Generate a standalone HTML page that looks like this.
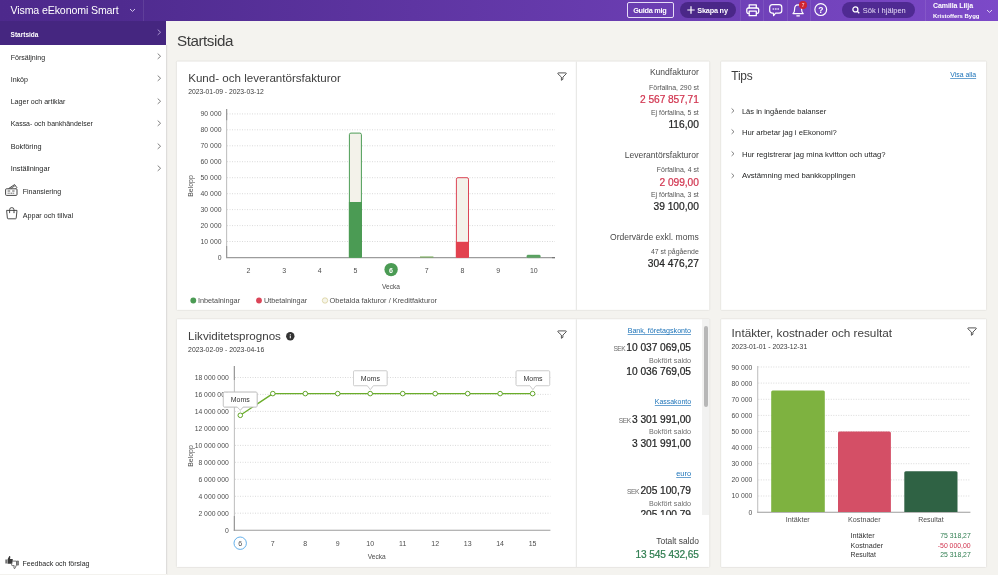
<!DOCTYPE html>
<html lang="sv">
<head>
<meta charset="utf-8">
<title>Startsida</title>
<style>
*{box-sizing:border-box;margin:0;padding:0}
html,body{width:998px;height:575px;overflow:hidden}
body{font-family:"Liberation Sans",sans-serif;background:#f4f3ef;color:#252626;position:relative}
#w{position:absolute;left:0;top:0;width:998px;height:575px;will-change:transform}
.abs{position:absolute}
.t{position:absolute;white-space:nowrap;line-height:20px;height:20px}
svg{position:absolute;overflow:visible}
#top{position:absolute;left:0;top:0;width:998px;height:20.8px;background:linear-gradient(90deg,#4d298c 0%,#4f2b8f 12%,#7c49c8 100%)}
.sep{position:absolute;top:0;width:1px;height:20.8px;background:rgba(255,255,255,.09)}
#side{position:absolute;left:0;top:20.8px;width:166px;height:554.2px;background:#fff}
.panel{position:absolute;background:#fff;border:1px solid #e3e2de}
</style>
</head>
<body>
<div id="w">
<!-- TOPBAR -->
<div id="top"></div>
<div class="t" style="left:10.5px;top:0.25px;font-size:10.6px;color:#fff;letter-spacing:-.12px">Visma eEkonomi Smart</div>
<svg style="left:129px;top:8.2px" width="7" height="5" viewBox="0 0 7 5"><path d="M1 1L3.5 3.4L6 1" fill="none" stroke="#d9cdee" stroke-width="0.95"/></svg>
<div class="sep" style="left:143px"></div>
<div class="sep" style="left:740px"></div>
<div class="sep" style="left:763px"></div>
<div class="sep" style="left:786.5px"></div>
<div class="sep" style="left:809.5px"></div>
<div class="sep" style="left:925px"></div>
<div class="abs" style="left:626.5px;top:2.4px;width:47.5px;height:15.2px;border:1px solid #e6dcf6;border-radius:2px"></div>
<div class="t" style="left:633.2px;top:0.75px;font-size:7.3px;color:#fff;font-weight:700;letter-spacing:-.28px">Guida mig</div>
<div class="abs" style="left:680px;top:2.2px;width:56.4px;height:15.6px;border-radius:8px;background:#4a2788"></div>
<svg style="left:686.5px;top:6.2px" width="8" height="8" viewBox="0 0 8 8"><path d="M4 0.3V7.7M0.3 4H7.7" stroke="#fff" stroke-width="1.2" fill="none"/></svg>
<div class="t" style="left:697.3px;top:0.75px;font-size:7.3px;color:#fff;font-weight:700;letter-spacing:-.2px">Skapa ny</div>
<svg style="left:745.5px;top:3.5px" width="13.5" height="12.5" viewBox="0 0 13.5 12.5" fill="none" stroke="#fff" stroke-width="1.3" stroke-linejoin="round"><path d="M3.2 4.2V0.8H10.3V4.2"/><rect x="0.8" y="4" width="11.9" height="5.4" rx="1.6"/><path d="M3.2 7.2H10.3V11.7H3.2Z" fill="#6f40ba"/></svg>
<svg style="left:769px;top:3.6px" width="13.5" height="12.5" viewBox="0 0 13.5 12.5" fill="none" stroke="#fff" stroke-width="1.2" stroke-linejoin="round"><path d="M3.4 0.7H10.1Q12.8 0.7 12.8 3.4V6.4Q12.8 9.1 10.1 9.1H6.6L4.6 11.6L4.3 9.1H3.4Q0.7 9.1 0.7 6.4V3.4Q0.7 0.7 3.4 0.7Z"/><path d="M3.6 4.9H5.2M6 4.9H7.6M8.4 4.9H10" stroke="#e0d2f5" stroke-width="1.5"/></svg>
<svg style="left:792px;top:3.8px" width="12.5" height="13" viewBox="0 0 12.5 13" fill="none" stroke="#fff" stroke-width="1.2" stroke-linejoin="round" stroke-linecap="round"><path d="M1 9.6Q2.6 8.4 2.6 5.2Q2.6 0.9 6.1 0.9Q9.6 0.9 9.6 5.2Q9.6 8.4 11.2 9.6Z"/><path d="M4.8 11.8H7.4"/></svg>
<div class="abs" style="left:798.8px;top:0.6px;width:8.2px;height:8.2px;border-radius:50%;background:#cf2431"></div>
<div class="t" style="left:703.0px;width:200px;text-align:center;top:-4.25px;font-size:4.8px;color:#f4b4b4;font-weight:700">7</div>
<svg style="left:814px;top:3px" width="13.5" height="13.5" viewBox="0 0 13.5 13.5" fill="none" stroke="#fff" stroke-width="1.2"><circle cx="6.75" cy="6.6" r="5.9"/></svg>
<div class="t" style="left:720.8px;width:200px;text-align:center;top:0.25px;font-size:8.5px;color:#fff;font-weight:700">?</div>
<div class="abs" style="left:842px;top:2.2px;width:73.4px;height:15.6px;border-radius:8px;background:#4f2a92"></div>
<svg style="left:851.5px;top:6px" width="8" height="8" viewBox="0 0 8 8" fill="none" stroke="#fff" stroke-width="1.3"><circle cx="3.4" cy="3.4" r="2.5"/><path d="M5.2 5.2L7.3 7.3"/></svg>
<div class="t" style="left:862.8px;top:0.75px;font-size:7.5px;color:#e6dcf6">Sök i hjälpen</div>
<div class="t" style="left:932.9px;top:-4.25px;font-size:7.0px;color:#fff;font-weight:700;letter-spacing:-.06px">Camilla Lilja</div>
<div class="t" style="left:932.9px;top:6.25px;font-size:5.95px;color:#fff;font-weight:700">Kristoffers Bygg</div>
<svg style="left:986.3px;top:8.9px" width="7" height="5" viewBox="0 0 7 5"><path d="M1 1L3.5 3.4L6 1" fill="none" stroke="#e6dcf6" stroke-width="0.95"/></svg>
<!-- SIDEBAR -->
<div id="side"></div>
<svg style="left:0;top:0" width="998" height="575" viewBox="0 0 998 575"><path d="M166.6 45V575" stroke="#dedddb" stroke-width="1.2" fill="none"/></svg>
<div class="abs" style="left:0;top:20.8px;width:166.3px;height:24px;background:#452680"></div>
<div class="t" style="left:10.6px;top:24.75px;font-size:6.5px;color:#fff;font-weight:700">Startsida</div>
<svg style="left:156.5px;top:29.2px" width="4.5" height="6.5" viewBox="0 0 4.5 6.5"><path d="M0.7 0.6L3.6 3.25L0.7 5.9" fill="none" stroke="#b9a6dc" stroke-width="0.85"/></svg>
<div class="t" style="left:10.7px;top:47.75px;font-size:7.05px;color:#252626">Försäljning</div>
<svg style="left:156.5px;top:53.1px" width="4.5" height="6.5" viewBox="0 0 4.5 6.5"><path d="M0.7 0.6L3.6 3.25L0.7 5.9" fill="none" stroke="#6b6b6b" stroke-width="0.85"/></svg>
<div class="t" style="left:10.7px;top:69.75px;font-size:7.05px;color:#252626">Inköp</div>
<svg style="left:156.5px;top:75.4px" width="4.5" height="6.5" viewBox="0 0 4.5 6.5"><path d="M0.7 0.6L3.6 3.25L0.7 5.9" fill="none" stroke="#6b6b6b" stroke-width="0.85"/></svg>
<div class="t" style="left:10.7px;top:92.25px;font-size:7.08px;color:#252626">Lager och artiklar</div>
<svg style="left:156.5px;top:97.6px" width="4.5" height="6.5" viewBox="0 0 4.5 6.5"><path d="M0.7 0.6L3.6 3.25L0.7 5.9" fill="none" stroke="#6b6b6b" stroke-width="0.85"/></svg>
<div class="t" style="left:10.7px;top:113.75px;font-size:6.95px;color:#252626">Kassa- och bankhändelser</div>
<svg style="left:156.5px;top:120.0px" width="4.5" height="6.5" viewBox="0 0 4.5 6.5"><path d="M0.7 0.6L3.6 3.25L0.7 5.9" fill="none" stroke="#6b6b6b" stroke-width="0.85"/></svg>
<div class="t" style="left:10.7px;top:136.75px;font-size:7.3px;color:#252626">Bokföring</div>
<svg style="left:156.5px;top:142.6px" width="4.5" height="6.5" viewBox="0 0 4.5 6.5"><path d="M0.7 0.6L3.6 3.25L0.7 5.9" fill="none" stroke="#6b6b6b" stroke-width="0.85"/></svg>
<div class="t" style="left:10.7px;top:158.75px;font-size:7.27px;color:#252626">Inställningar</div>
<svg style="left:156.5px;top:165.0px" width="4.5" height="6.5" viewBox="0 0 4.5 6.5"><path d="M0.7 0.6L3.6 3.25L0.7 5.9" fill="none" stroke="#6b6b6b" stroke-width="0.85"/></svg>
<svg style="left:5.3px;top:184px" width="13" height="12" viewBox="0 0 13 12" fill="none" stroke="#3a3a3a" stroke-width="0.95" stroke-linejoin="round"><rect x="0.6" y="4.8" width="11.4" height="6.6" rx="0.9"/><path d="M3.6 4.6L9.6 0.6L11.8 3.6L10.9 4.6"/><path d="M5.8 4.4L9.9 1.8" stroke-width="0.8"/><path d="M2.6 7H5.2M7.2 7H9.6" stroke-width="0.9" stroke="#444"/><path d="M2.6 9.2H9.6" stroke-width="0.9" stroke="#555" stroke-dasharray="1.2 0.5"/></svg>
<div class="t" style="left:22.7px;top:181.75px;font-size:7.05px;color:#252626">Finansiering</div>
<svg style="left:6px;top:206.8px" width="12" height="12.5" viewBox="0 0 12 12.5" fill="none" stroke="#3a3a3a" stroke-width="0.9" stroke-linejoin="round"><path d="M0.6 3.4H11L10.2 11.2Q10.1 11.8 9.5 11.8H2.1Q1.5 11.8 1.4 11.2Z"/><path d="M3.6 5.4V2.8Q3.6 0.6 5.8 0.6Q8 0.6 8 2.8V5.4"/><circle cx="3.6" cy="5.6" r="0.55" fill="#3a3a3a" stroke="none"/><circle cx="8" cy="5.6" r="0.55" fill="#3a3a3a" stroke="none"/></svg>
<div class="t" style="left:22.7px;top:206.25px;font-size:7.15px;color:#252626">Appar och tillval</div>
<svg style="left:5.2px;top:555.0px" width="14" height="14" viewBox="0 0 14 14"><path d="M0.5 4.4H1.7V8.6H0.5ZM2.5 4.6L4.3 1Q5.5 0.8 5.3 2.4L5 4H7.3Q8 4.2 7.8 5L7.2 8.2Q7 8.8 6.3 8.8H2.5Z" fill="#3a3a3a"/><path d="M12.3 6H13.4V10.1H12.3ZM11.5 10L9.8 13.5Q8.7 13.7 8.9 12.3L9.2 10.6H7.1Q6.4 10.4 6.6 9.6L7.2 6.7Q7.4 6.1 8.1 6.1H11.5Z" fill="#fff" stroke="#444" stroke-width="0.75" stroke-linejoin="round"/></svg>
<div class="t" style="left:22.5px;top:553.75px;font-size:7.0px;color:#252626">Feedback och förslag</div>
<!-- MAIN -->
<div class="t" style="left:177.0px;top:30.75px;font-size:15.2px;color:#3d3d3d;letter-spacing:-.45px">Startsida</div>
<svg style="left:0;top:0" width="998" height="575" viewBox="0 0 998 575">
<rect x="176.35" y="61.1" width="533.40" height="249.30" rx="1" fill="#fff" stroke="#e5e4e0" stroke-width="0.9"/>
<rect x="720.65" y="61.1" width="265.95" height="249.30" rx="1" fill="#fff" stroke="#e5e4e0" stroke-width="0.9"/>
<rect x="176.35" y="318.75" width="533.40" height="248.70" rx="1" fill="#fff" stroke="#e5e4e0" stroke-width="0.9"/>
<rect x="720.65" y="318.75" width="265.95" height="248.70" rx="1" fill="#fff" stroke="#e5e4e0" stroke-width="0.9"/>
</svg>
<svg style="left:0;top:0" width="998" height="575" viewBox="0 0 998 575"><path d="M576.35 61.6V310M576.35 319.2V567" stroke="#e7e7e5" stroke-width="1.1" fill="none"/></svg>
<div class="t" style="left:188.2px;top:68.25px;font-size:11.6px;color:#3d3d3d">Kund- och leverantörsfakturor</div>
<div class="t" style="left:188.2px;top:81.75px;font-size:6.8px;color:#3a3a3a">2023-01-09 - 2023-03-12</div>
<svg style="left:556.5px;top:72px" width="10" height="9" viewBox="0 0 10 9"><path d="M1.3 0.9H8.7Q9.6 0.9 9.2 1.8L5.9 5.1V7.3L4.4 8.3V5.1L0.9 1.8Q0.5 0.9 1.3 0.9Z" fill="none" stroke="#3a3a3a" stroke-width="0.85" stroke-linejoin="round"/></svg>
<svg style="left:0;top:0" width="998" height="575" viewBox="0 0 998 575">
<line x1="227.0" y1="241.5" x2="555.0" y2="241.5" stroke="#d3d3d3" stroke-width="0.85" stroke-dasharray="1 1.5"/>
<line x1="227.0" y1="225.6" x2="555.0" y2="225.6" stroke="#d3d3d3" stroke-width="0.85" stroke-dasharray="1 1.5"/>
<line x1="227.0" y1="209.6" x2="555.0" y2="209.6" stroke="#d3d3d3" stroke-width="0.85" stroke-dasharray="1 1.5"/>
<line x1="227.0" y1="193.7" x2="555.0" y2="193.7" stroke="#d3d3d3" stroke-width="0.85" stroke-dasharray="1 1.5"/>
<line x1="227.0" y1="177.7" x2="555.0" y2="177.7" stroke="#d3d3d3" stroke-width="0.85" stroke-dasharray="1 1.5"/>
<line x1="227.0" y1="161.7" x2="555.0" y2="161.7" stroke="#d3d3d3" stroke-width="0.85" stroke-dasharray="1 1.5"/>
<line x1="227.0" y1="145.8" x2="555.0" y2="145.8" stroke="#d3d3d3" stroke-width="0.85" stroke-dasharray="1 1.5"/>
<line x1="227.0" y1="129.8" x2="555.0" y2="129.8" stroke="#d3d3d3" stroke-width="0.85" stroke-dasharray="1 1.5"/>
<line x1="227.0" y1="113.9" x2="555.0" y2="113.9" stroke="#d3d3d3" stroke-width="0.85" stroke-dasharray="1 1.5"/>
<line x1="226.6" y1="109" x2="226.6" y2="258" stroke="#c2c2c2" stroke-width="1.1"/>
<line x1="226.6" y1="109" x2="226.6" y2="120.3" stroke="#9a9a9a" stroke-width="1.2"/>
<line x1="226.6" y1="246" x2="226.6" y2="258" stroke="#9a9a9a" stroke-width="1.2"/>
<line x1="226" y1="257.6" x2="555" y2="257.6" stroke="#9c9c9c" stroke-width="1.1"/>
<line x1="552" y1="257.6" x2="555" y2="257.6" stroke="#777" stroke-width="1.2"/>
<path d="M349.4 257.4V134.6Q349.4 133.1 350.9 133.1H359.9Q361.4 133.1 361.4 134.6V257.4Z" fill="#f3f2ea" stroke="#4d9c56" stroke-width="1"/>
<rect x="348.9" y="202" width="13" height="55.4" fill="#4b9b54"/>
<path d="M456.4 257.4V179.2Q456.4 177.7 457.9 177.7H467Q468.5 177.7 468.5 179.2V257.4Z" fill="#f3f2ea" stroke="#dc4556" stroke-width="1"/>
<rect x="455.9" y="241.5" width="13.1" height="15.9" fill="#e2424f"/>
<rect x="456.9" y="240.7" width="11.1" height="0.8" fill="#fff"/>
<rect x="420" y="256.5" width="13.4" height="1" fill="#6fa84f"/>
<rect x="526.8" y="255" width="13.6" height="2.6" rx="1.2" fill="#5ba363" stroke="#4b9b54" stroke-width="0.4"/>
<circle cx="391.1" cy="269.6" r="6.7" fill="#4b9b54"/>
<circle cx="193.3" cy="300.5" r="2.9" fill="#4b9b54"/>
<circle cx="259" cy="300.5" r="2.9" fill="#db4558"/>
<circle cx="325" cy="300.5" r="2.7" fill="#f6f5ea" stroke="#d9d09c" stroke-width="0.8"/>
</svg>
<div class="t" style="right:776.5px;top:247.75px;font-size:6.85px;color:#4d4d4d">0</div>
<div class="t" style="right:776.5px;top:231.75px;font-size:6.85px;color:#4d4d4d">10 000</div>
<div class="t" style="right:776.5px;top:215.75px;font-size:6.85px;color:#4d4d4d">20 000</div>
<div class="t" style="right:776.5px;top:199.75px;font-size:6.85px;color:#4d4d4d">30 000</div>
<div class="t" style="right:776.5px;top:183.75px;font-size:6.85px;color:#4d4d4d">40 000</div>
<div class="t" style="right:776.5px;top:167.75px;font-size:6.85px;color:#4d4d4d">50 000</div>
<div class="t" style="right:776.5px;top:151.75px;font-size:6.85px;color:#4d4d4d">60 000</div>
<div class="t" style="right:776.5px;top:135.75px;font-size:6.85px;color:#4d4d4d">70 000</div>
<div class="t" style="right:776.5px;top:119.75px;font-size:6.85px;color:#4d4d4d">80 000</div>
<div class="t" style="right:776.5px;top:103.75px;font-size:6.85px;color:#4d4d4d">90 000</div>
<div class="t" style="left:148.4px;width:200px;text-align:center;top:260.75px;font-size:7.0px;color:#4d4d4d">2</div>
<div class="t" style="left:184.1px;width:200px;text-align:center;top:260.75px;font-size:7.0px;color:#4d4d4d">3</div>
<div class="t" style="left:219.8px;width:200px;text-align:center;top:260.75px;font-size:7.0px;color:#4d4d4d">4</div>
<div class="t" style="left:255.4px;width:200px;text-align:center;top:260.75px;font-size:7.0px;color:#4d4d4d">5</div>
<div class="t" style="left:291.1px;width:200px;text-align:center;top:261.25px;font-size:7.1px;color:#fff;font-weight:700">6</div>
<div class="t" style="left:326.8px;width:200px;text-align:center;top:260.75px;font-size:7.0px;color:#4d4d4d">7</div>
<div class="t" style="left:362.5px;width:200px;text-align:center;top:260.75px;font-size:7.0px;color:#4d4d4d">8</div>
<div class="t" style="left:398.2px;width:200px;text-align:center;top:260.75px;font-size:7.0px;color:#4d4d4d">9</div>
<div class="t" style="left:433.8px;width:200px;text-align:center;top:260.75px;font-size:7.0px;color:#4d4d4d">10</div>
<div class="t" style="left:291.0px;width:200px;text-align:center;top:276.75px;font-size:6.6px;color:#4d4d4d">Vecka</div>
<div class="abs" style="left:190.6px;top:185.6px;width:0;height:0"><div style="position:absolute;left:0;top:0;transform:translate(-50%,-50%) rotate(-90deg);white-space:nowrap;font-size:6.9px;line-height:8px;color:#4d4d4d">Belopp</div></div>
<div class="t" style="left:197.9px;top:290.75px;font-size:7.3px;color:#4d4d4d">Inbetalningar</div>
<div class="t" style="left:263.9px;top:290.75px;font-size:7.27px;color:#4d4d4d">Utbetalningar</div>
<div class="t" style="left:329.6px;top:290.75px;font-size:7.38px;color:#4d4d4d">Obetalda fakturor / Kreditfakturor</div>
<div class="t" style="right:299.2px;top:62.25px;font-size:8.55px;color:#4a4a4a">Kundfakturor</div>
<div class="t" style="right:299.2px;top:77.75px;font-size:6.95px;color:#555">Förfallna, 290 st</div>
<div class="t" style="right:299.2px;top:89.75px;font-size:10.2px;color:#d1344f;-webkit-text-stroke:0.22px;letter-spacing:-.06px">2 567 857,71</div>
<div class="t" style="right:299.2px;top:102.75px;font-size:6.95px;color:#555">Ej förfallna, 5 st</div>
<div class="t" style="right:299.2px;top:114.75px;font-size:10.2px;color:#252626;-webkit-text-stroke:0.22px;letter-spacing:0px">116,00</div>
<div class="t" style="right:299.2px;top:145.25px;font-size:8.55px;color:#4a4a4a">Leverantörsfakturor</div>
<div class="t" style="right:299.2px;top:159.75px;font-size:6.95px;color:#555">Förfallna, 4 st</div>
<div class="t" style="right:299.2px;top:172.75px;font-size:10.2px;color:#d1344f;-webkit-text-stroke:0.22px;letter-spacing:-.04px">2 099,00</div>
<div class="t" style="right:299.2px;top:184.75px;font-size:6.95px;color:#555">Ej förfallna, 3 st</div>
<div class="t" style="right:299.2px;top:196.75px;font-size:10.2px;color:#252626;-webkit-text-stroke:0.22px;letter-spacing:0px">39 100,00</div>
<div class="t" style="right:299.2px;top:227.25px;font-size:8.55px;color:#4a4a4a">Ordervärde exkl. moms</div>
<div class="t" style="right:299.2px;top:241.75px;font-size:6.95px;color:#555">47 st pågående</div>
<div class="t" style="right:299.2px;top:253.75px;font-size:10.2px;color:#252626;-webkit-text-stroke:0.22px;letter-spacing:0px">304 476,27</div>
<!-- TIPS -->
<div class="t" style="left:731.3px;top:66.25px;font-size:11.9px;color:#3d3d3d;letter-spacing:-.2px">Tips</div>
<div class="t" style="left:950.2px;top:64.75px;font-size:6.9px;color:#1b72b8;text-decoration:underline;text-underline-offset:0.6px;text-decoration-thickness:0.7px;text-decoration-color:rgba(27,114,184,.65)">Visa alla</div>
<div class="t" style="left:741.9px;top:101.75px;font-size:7.55px;color:#252626">Läs in ingående balanser</div>
<svg style="left:731px;top:107.6px" width="4" height="5.4" viewBox="0 0 4 5.4"><path d="M0.6 0.5L3 2.7L0.6 4.9" fill="none" stroke="#555" stroke-width="0.75"/></svg>
<div class="t" style="left:741.9px;top:122.75px;font-size:7.63px;color:#252626">Hur arbetar jag i eEkonomi?</div>
<svg style="left:731px;top:129.3px" width="4" height="5.4" viewBox="0 0 4 5.4"><path d="M0.6 0.5L3 2.7L0.6 4.9" fill="none" stroke="#555" stroke-width="0.75"/></svg>
<div class="t" style="left:741.9px;top:144.75px;font-size:7.73px;color:#252626">Hur registrerar jag mina kvitton och uttag?</div>
<svg style="left:731px;top:150.7px" width="4" height="5.4" viewBox="0 0 4 5.4"><path d="M0.6 0.5L3 2.7L0.6 4.9" fill="none" stroke="#555" stroke-width="0.75"/></svg>
<div class="t" style="left:741.9px;top:165.75px;font-size:7.73px;color:#252626">Avstämning med bankkopplingen</div>
<svg style="left:731px;top:172.8px" width="4" height="5.4" viewBox="0 0 4 5.4"><path d="M0.6 0.5L3 2.7L0.6 4.9" fill="none" stroke="#555" stroke-width="0.75"/></svg>
<!-- LIKVIDITET -->
<div class="t" style="left:188.1px;top:326.25px;font-size:11.6px;color:#3d3d3d">Likviditetsprognos</div>
<svg style="left:286.2px;top:331.9px" width="8.6" height="8.6" viewBox="0 0 8.6 8.6"><circle cx="4.3" cy="4.3" r="4.2" fill="#333"/><rect x="3.8" y="3.7" width="1" height="2.6" fill="#fff"/><rect x="3.8" y="2.2" width="1" height="1" fill="#fff"/></svg>
<div class="t" style="left:188.1px;top:339.75px;font-size:6.85px;color:#3a3a3a">2023-02-09 - 2023-04-16</div>
<svg style="left:556.6px;top:329.7px" width="10" height="9" viewBox="0 0 10 9"><path d="M1.3 0.9H8.7Q9.6 0.9 9.2 1.8L5.9 5.1V7.3L4.4 8.3V5.1L0.9 1.8Q0.5 0.9 1.3 0.9Z" fill="none" stroke="#3a3a3a" stroke-width="0.85" stroke-linejoin="round"/></svg>
<svg style="left:0;top:0" width="998" height="575" viewBox="0 0 998 575">
<line x1="235.0" y1="513.2" x2="550.4" y2="513.2" stroke="#d3d3d3" stroke-width="0.85" stroke-dasharray="1 1.5"/>
<line x1="235.0" y1="496.3" x2="550.4" y2="496.3" stroke="#d3d3d3" stroke-width="0.85" stroke-dasharray="1 1.5"/>
<line x1="235.0" y1="479.3" x2="550.4" y2="479.3" stroke="#d3d3d3" stroke-width="0.85" stroke-dasharray="1 1.5"/>
<line x1="235.0" y1="462.3" x2="550.4" y2="462.3" stroke="#d3d3d3" stroke-width="0.85" stroke-dasharray="1 1.5"/>
<line x1="235.0" y1="445.4" x2="550.4" y2="445.4" stroke="#d3d3d3" stroke-width="0.85" stroke-dasharray="1 1.5"/>
<line x1="235.0" y1="428.4" x2="550.4" y2="428.4" stroke="#d3d3d3" stroke-width="0.85" stroke-dasharray="1 1.5"/>
<line x1="235.0" y1="411.4" x2="550.4" y2="411.4" stroke="#d3d3d3" stroke-width="0.85" stroke-dasharray="1 1.5"/>
<line x1="235.0" y1="394.4" x2="550.4" y2="394.4" stroke="#d3d3d3" stroke-width="0.85" stroke-dasharray="1 1.5"/>
<line x1="235.0" y1="377.5" x2="550.4" y2="377.5" stroke="#d3d3d3" stroke-width="0.85" stroke-dasharray="1 1.5"/>
<line x1="234.4" y1="366" x2="234.4" y2="530.7" stroke="#c2c2c2" stroke-width="1.1"/>
<line x1="234.4" y1="366" x2="234.4" y2="380" stroke="#9a9a9a" stroke-width="1.2"/>
<line x1="234.4" y1="516" x2="234.4" y2="530.7" stroke="#9a9a9a" stroke-width="1.2"/>
<line x1="233.8" y1="530.3" x2="550.4" y2="530.3" stroke="#9c9c9c" stroke-width="1.1"/>
<polyline points="240.3,415.3 272.8,393.6 305.3,393.6 337.7,393.6 370.2,393.6 402.7,393.6 435.2,393.6 467.7,393.6 500.1,393.6 532.6,393.6" fill="none" stroke="#6aad2a" stroke-width="1.3" stroke-linejoin="round"/>
<circle cx="240.3" cy="415.3" r="2.3" fill="#fff" stroke="#63a62a" stroke-width="1"/>
<circle cx="272.8" cy="393.6" r="2.3" fill="#fff" stroke="#63a62a" stroke-width="1"/>
<circle cx="305.3" cy="393.6" r="2.3" fill="#fff" stroke="#63a62a" stroke-width="1"/>
<circle cx="337.7" cy="393.6" r="2.3" fill="#fff" stroke="#63a62a" stroke-width="1"/>
<circle cx="370.2" cy="393.6" r="2.3" fill="#fff" stroke="#63a62a" stroke-width="1"/>
<circle cx="402.7" cy="393.6" r="2.3" fill="#fff" stroke="#63a62a" stroke-width="1"/>
<circle cx="435.2" cy="393.6" r="2.3" fill="#fff" stroke="#63a62a" stroke-width="1"/>
<circle cx="467.7" cy="393.6" r="2.3" fill="#fff" stroke="#63a62a" stroke-width="1"/>
<circle cx="500.1" cy="393.6" r="2.3" fill="#fff" stroke="#63a62a" stroke-width="1"/>
<circle cx="532.6" cy="393.6" r="2.3" fill="#fff" stroke="#63a62a" stroke-width="1"/>
<circle cx="240.2" cy="543.2" r="6.2" fill="#fff" stroke="#52a7e8" stroke-width="0.9"/>
<path d="M224.4 392.2H256.0Q257.0 392.2 257.0 393.2V405.9Q257.0 406.9 256.0 406.9H243.2L240.2 410.2L237.2 406.9H224.4Q223.4 406.9 223.4 405.9V393.2Q223.4 392.2 224.4 392.2Z" fill="#fff" stroke="#cdcdcd" stroke-width="0.9" style="filter:drop-shadow(0.4px 0.7px 0.7px rgba(0,0,0,.13))"/>
<path d="M354.5 370.8H386.1Q387.1 370.8 387.1 371.8V384.7Q387.1 385.7 386.1 385.7H373.3L370.3 389.6L367.3 385.7H354.5Q353.5 385.7 353.5 384.7V371.8Q353.5 370.8 354.5 370.8Z" fill="#fff" stroke="#cdcdcd" stroke-width="0.9" style="filter:drop-shadow(0.4px 0.7px 0.7px rgba(0,0,0,.13))"/>
<path d="M517.1 370.8H548.7Q549.7 370.8 549.7 371.8V384.7Q549.7 385.7 548.7 385.7H535.9L532.9 389.6L529.9 385.7H517.1Q516.1 385.7 516.1 384.7V371.8Q516.1 370.8 517.1 370.8Z" fill="#fff" stroke="#cdcdcd" stroke-width="0.9" style="filter:drop-shadow(0.4px 0.7px 0.7px rgba(0,0,0,.13))"/>
</svg>
<div class="t" style="right:769.3px;top:520.75px;font-size:6.8px;color:#4d4d4d">0</div>
<div class="t" style="right:769.3px;top:503.75px;font-size:6.8px;color:#4d4d4d">2 000 000</div>
<div class="t" style="right:769.3px;top:486.75px;font-size:6.8px;color:#4d4d4d">4 000 000</div>
<div class="t" style="right:769.3px;top:469.75px;font-size:6.8px;color:#4d4d4d">6 000 000</div>
<div class="t" style="right:769.3px;top:452.75px;font-size:6.8px;color:#4d4d4d">8 000 000</div>
<div class="t" style="right:769.3px;top:435.75px;font-size:6.8px;color:#4d4d4d">10 000 000</div>
<div class="t" style="right:769.3px;top:418.75px;font-size:6.8px;color:#4d4d4d">12 000 000</div>
<div class="t" style="right:769.3px;top:401.75px;font-size:6.8px;color:#4d4d4d">14 000 000</div>
<div class="t" style="right:769.3px;top:384.75px;font-size:6.8px;color:#4d4d4d">16 000 000</div>
<div class="t" style="right:769.3px;top:367.75px;font-size:6.8px;color:#4d4d4d">18 000 000</div>
<svg style="left:0;top:0" width="998" height="575" viewBox="0 0 998 575">
<path d="M224.4 392.2H256.0Q257.0 392.2 257.0 393.2V405.9Q257.0 406.9 256.0 406.9H243.2L240.2 410.2L237.2 406.9H224.4Q223.4 406.9 223.4 405.9V393.2Q223.4 392.2 224.4 392.2Z" fill="#fff" stroke="#cdcdcd" stroke-width="0.9" style="filter:drop-shadow(0.4px 0.7px 0.7px rgba(0,0,0,.13))"/>
</svg>
<div class="t" style="left:140.3px;width:200px;text-align:center;top:389.75px;font-size:7.0px;color:#333">Moms</div>
<div class="t" style="left:270.4px;width:200px;text-align:center;top:368.75px;font-size:7.0px;color:#333">Moms</div>
<div class="t" style="left:433.0px;width:200px;text-align:center;top:368.75px;font-size:7.0px;color:#333">Moms</div>
<div class="t" style="left:140.3px;width:200px;text-align:center;top:533.75px;font-size:7.0px;color:#4d4d4d">6</div>
<div class="t" style="left:172.8px;width:200px;text-align:center;top:533.75px;font-size:7.0px;color:#4d4d4d">7</div>
<div class="t" style="left:205.3px;width:200px;text-align:center;top:533.75px;font-size:7.0px;color:#4d4d4d">8</div>
<div class="t" style="left:237.7px;width:200px;text-align:center;top:533.75px;font-size:7.0px;color:#4d4d4d">9</div>
<div class="t" style="left:270.2px;width:200px;text-align:center;top:533.75px;font-size:7.0px;color:#4d4d4d">10</div>
<div class="t" style="left:302.7px;width:200px;text-align:center;top:533.75px;font-size:7.0px;color:#4d4d4d">11</div>
<div class="t" style="left:335.2px;width:200px;text-align:center;top:533.75px;font-size:7.0px;color:#4d4d4d">12</div>
<div class="t" style="left:367.7px;width:200px;text-align:center;top:533.75px;font-size:7.0px;color:#4d4d4d">13</div>
<div class="t" style="left:400.1px;width:200px;text-align:center;top:533.75px;font-size:7.0px;color:#4d4d4d">14</div>
<div class="t" style="left:432.6px;width:200px;text-align:center;top:533.75px;font-size:7.0px;color:#4d4d4d">15</div>
<div class="t" style="left:276.7px;width:200px;text-align:center;top:546.75px;font-size:6.6px;color:#4d4d4d">Vecka</div>
<div class="abs" style="left:190.5px;top:456px;width:0;height:0"><div style="position:absolute;left:0;top:0;transform:translate(-50%,-50%) rotate(-90deg);white-space:nowrap;font-size:6.9px;line-height:8px;color:#4d4d4d">Belopp</div></div>
<div class="abs" style="left:577px;top:319.4px;width:132.4px;height:195.3px;overflow:hidden">
<div class="abs" style="left:124.6px;top:0;width:7.2px;height:195.3px;background:#f2f2f1"></div>
<div class="abs" style="left:127px;top:6.4px;width:3.9px;height:81px;border-radius:2px;background:#b7b7b7"></div>
</div>
<div class="t" style="right:307.0px;top:321.25px;font-size:7.14px;color:#1b72b8;text-decoration:underline;text-underline-offset:0.6px;text-decoration-thickness:0.7px;text-decoration-color:rgba(27,114,184,.65)">Bank, företagskonto</div>
<div class="t" style="right:307.0px;top:337.75px;font-size:10.2px;color:#252626;-webkit-text-stroke:0.22px;letter-spacing:-.04px">10 037 069,05</div>
<div class="t" style="left:613.4px;top:338.75px;font-size:6.6px;color:#6a6a6a;letter-spacing:-.45px">SEK</div>
<div class="t" style="right:307.0px;top:350.75px;font-size:7.2px;color:#6e6e6e">Bokfört saldo</div>
<div class="t" style="right:307.0px;top:361.75px;font-size:10.2px;color:#252626;-webkit-text-stroke:0.22px;letter-spacing:-.04px">10 036 769,05</div>
<div class="t" style="right:307.0px;top:391.75px;font-size:6.93px;color:#1b72b8;text-decoration:underline;text-underline-offset:0.6px;text-decoration-thickness:0.7px;text-decoration-color:rgba(27,114,184,.65)">Kassakonto</div>
<div class="t" style="right:307.0px;top:409.75px;font-size:10.2px;color:#252626;-webkit-text-stroke:0.22px;letter-spacing:-.04px">3 301 991,00</div>
<div class="t" style="left:618.8px;top:410.75px;font-size:6.6px;color:#6a6a6a;letter-spacing:-.45px">SEK</div>
<div class="t" style="right:307.0px;top:421.75px;font-size:7.2px;color:#6e6e6e">Bokfört saldo</div>
<div class="t" style="right:307.0px;top:433.75px;font-size:10.2px;color:#252626;-webkit-text-stroke:0.22px;letter-spacing:-.04px">3 301 991,00</div>
<div class="t" style="right:307.0px;top:463.75px;font-size:7.39px;color:#1b72b8;text-decoration:underline;text-underline-offset:0.6px;text-decoration-thickness:0.7px;text-decoration-color:rgba(27,114,184,.65)">euro</div>
<div class="t" style="right:307.0px;top:480.75px;font-size:10.2px;color:#252626;-webkit-text-stroke:0.22px;letter-spacing:-.04px">205 100,79</div>
<div class="t" style="left:627.0px;top:481.75px;font-size:6.6px;color:#6a6a6a;letter-spacing:-.45px">SEK</div>
<div class="t" style="right:307.0px;top:493.75px;font-size:7.2px;color:#6e6e6e">Bokfört saldo</div>
<div class="abs" style="left:600px;top:505px;width:100px;height:9.7px;overflow:hidden"><div class="t" style="right:9px;top:-0.25px;font-size:10.2px;letter-spacing:-.04px;color:#252626;-webkit-text-stroke:0.22px">205 100,79</div></div>
<div class="t" style="right:299.2px;top:531.25px;font-size:8.42px;color:#444">Totalt saldo</div>
<div class="t" style="right:299.2px;top:544.75px;font-size:10.1px;color:#2e7d4f;-webkit-text-stroke:0.22px;letter-spacing:-.1px">13 545 432,65</div>
<!-- RESULTAT -->
<div class="t" style="left:731.6px;top:322.75px;font-size:11.74px;color:#3d3d3d">Intäkter, kostnader och resultat</div>
<div class="t" style="left:731.6px;top:336.75px;font-size:6.8px;color:#3a3a3a">2023-01-01 - 2023-12-31</div>
<svg style="left:966.8px;top:327.3px" width="10" height="9" viewBox="0 0 10 9"><path d="M1.3 0.9H8.7Q9.6 0.9 9.2 1.8L5.9 5.1V7.3L4.4 8.3V5.1L0.9 1.8Q0.5 0.9 1.3 0.9Z" fill="none" stroke="#3a3a3a" stroke-width="0.85" stroke-linejoin="round"/></svg>
<svg style="left:0;top:0" width="998" height="575" viewBox="0 0 998 575">
<line x1="758.3" y1="496.0" x2="970.4" y2="496.0" stroke="#d3d3d3" stroke-width="0.85" stroke-dasharray="1 1.5"/>
<line x1="758.3" y1="479.9" x2="970.4" y2="479.9" stroke="#d3d3d3" stroke-width="0.85" stroke-dasharray="1 1.5"/>
<line x1="758.3" y1="463.7" x2="970.4" y2="463.7" stroke="#d3d3d3" stroke-width="0.85" stroke-dasharray="1 1.5"/>
<line x1="758.3" y1="447.6" x2="970.4" y2="447.6" stroke="#d3d3d3" stroke-width="0.85" stroke-dasharray="1 1.5"/>
<line x1="758.3" y1="431.5" x2="970.4" y2="431.5" stroke="#d3d3d3" stroke-width="0.85" stroke-dasharray="1 1.5"/>
<line x1="758.3" y1="415.4" x2="970.4" y2="415.4" stroke="#d3d3d3" stroke-width="0.85" stroke-dasharray="1 1.5"/>
<line x1="758.3" y1="399.3" x2="970.4" y2="399.3" stroke="#d3d3d3" stroke-width="0.85" stroke-dasharray="1 1.5"/>
<line x1="758.3" y1="383.1" x2="970.4" y2="383.1" stroke="#d3d3d3" stroke-width="0.85" stroke-dasharray="1 1.5"/>
<line x1="758.3" y1="367.0" x2="970.4" y2="367.0" stroke="#d3d3d3" stroke-width="0.85" stroke-dasharray="1 1.5"/>
<line x1="757.7" y1="366" x2="757.7" y2="512.6" stroke="#c2c2c2" stroke-width="1.1"/>
<line x1="757.2" y1="512.2" x2="970.4" y2="512.2" stroke="#9c9c9c" stroke-width="1.1"/>
<path d="M771.2 512.1V392.0Q771.2 390.5 772.7 390.5H823.3Q824.8 390.5 824.8 392.0V512.1Z" fill="#7eb240"/>
<path d="M838.0 512.1V432.9Q838.0 431.4 839.5 431.4H889.4Q890.9 431.4 890.9 432.9V512.1Z" fill="#d44f66"/>
<path d="M904.3 512.1V472.8Q904.3 471.3 905.8 471.3H956.0Q957.5 471.3 957.5 472.8V512.1Z" fill="#2f6244"/>
</svg>
<div class="t" style="right:245.6px;top:502.75px;font-size:6.83px;color:#4d4d4d">0</div>
<div class="t" style="right:245.6px;top:485.75px;font-size:6.83px;color:#4d4d4d">10 000</div>
<div class="t" style="right:245.6px;top:469.75px;font-size:6.83px;color:#4d4d4d">20 000</div>
<div class="t" style="right:245.6px;top:453.75px;font-size:6.83px;color:#4d4d4d">30 000</div>
<div class="t" style="right:245.6px;top:437.75px;font-size:6.83px;color:#4d4d4d">40 000</div>
<div class="t" style="right:245.6px;top:421.75px;font-size:6.83px;color:#4d4d4d">50 000</div>
<div class="t" style="right:245.6px;top:405.75px;font-size:6.83px;color:#4d4d4d">60 000</div>
<div class="t" style="right:245.6px;top:389.75px;font-size:6.83px;color:#4d4d4d">70 000</div>
<div class="t" style="right:245.6px;top:373.75px;font-size:6.83px;color:#4d4d4d">80 000</div>
<div class="t" style="right:245.6px;top:357.75px;font-size:6.83px;color:#4d4d4d">90 000</div>
<div class="t" style="left:697.8px;width:200px;text-align:center;top:509.75px;font-size:7.2px;color:#4d4d4d">Intäkter</div>
<div class="t" style="left:764.4px;width:200px;text-align:center;top:510.25px;font-size:7.17px;color:#4d4d4d">Kostnader</div>
<div class="t" style="left:830.9px;width:200px;text-align:center;top:509.75px;font-size:6.95px;color:#4d4d4d">Resultat</div>
<div class="t" style="left:850.4px;top:525.75px;font-size:7.3px;color:#333">Intäkter</div>
<div class="t" style="left:850.4px;top:536.25px;font-size:7.17px;color:#333">Kostnader</div>
<div class="t" style="left:850.4px;top:544.75px;font-size:6.95px;color:#333">Resultat</div>
<div class="t" style="right:27.3px;top:525.75px;font-size:6.85px;color:#2e7d4f">75 318,27</div>
<div class="t" style="right:27.3px;top:535.75px;font-size:6.9px;color:#d1344f">-50 000,00</div>
<div class="t" style="right:27.3px;top:544.75px;font-size:6.85px;color:#2e7d4f">25 318,27</div>
<div class="abs" style="left:0;top:573.8px;width:167px;height:1.2px;background:#f3f2ee"></div>
</div>
</body>
</html>
